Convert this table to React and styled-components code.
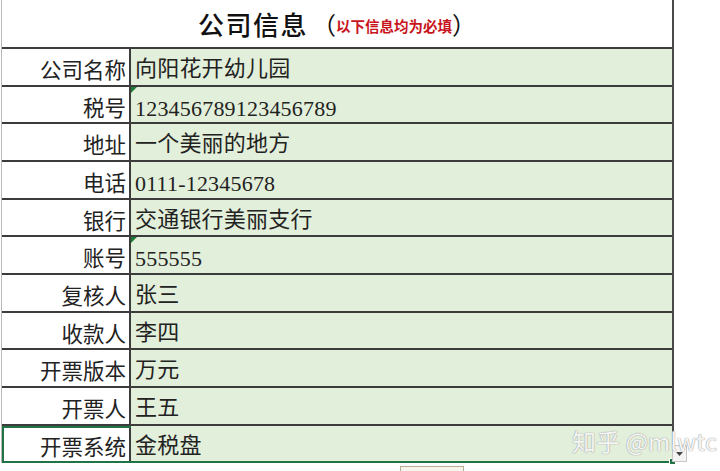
import React from 'react';
import styled, { createGlobalStyle } from 'styled-components';

const GlobalStyle = createGlobalStyle`
  html, body {
    margin: 0;
    padding: 0;
    background: #fff;
  }
  body {
    font-family: "Liberation Serif", "Noto Sans CJK SC", serif;
  }
`;

const Page = styled.div`
  position: relative;
  width: 720px;
  height: 471px;
  overflow: hidden;
`;

const Sheet = styled.div`
  width: 670px;
  margin-left: 1px;
  border-left: 1px solid #b9b9b9;
  border-right: 2px solid #4a4a4a;
`;

const TitleRow = styled.div`
  height: 47px;
  display: flex;
  align-items: center;
  justify-content: center;
  border-bottom: 2px solid #3c3c3c;
  color: #111;
`;

const Title = styled.span`
  font-family: "Noto Sans CJK SC", sans-serif;
  font-size: 26px;
  font-weight: 500;
  letter-spacing: 1.5px;
`;

const Paren = styled.span`
  font-family: "Noto Sans CJK SC", sans-serif;
  font-size: 24px;
  margin: 0 0 0 4px;
  &:last-child {
    margin: 0;
  }
`;

const Note = styled.span`
  font-family: "Noto Sans CJK SC", sans-serif;
  font-size: 14.5px;
  font-weight: 700;
  color: #c8141c;
  padding-top: 4px;
`;

const Row = styled.div`
  display: grid;
  grid-template-columns: 129px 1fr;
  height: ${(p) => p.$h}px;
  box-sizing: border-box;
  border-bottom: 2px solid ${(p) => (p.$active ? '#217346' : '#3c3c3c')};
  ${(p) => p.$active && 'outline: 2px solid #217346; outline-offset: -2px; position: relative;'}
`;

const Label = styled.div`
  display: flex;
  align-items: center;
  justify-content: flex-end;
  padding: 4px 3px 0 0;
  border-right: 2px solid #3c3c3c;
  font-family: "Noto Sans CJK SC", sans-serif;
  font-size: 21.5px;
  line-height: 1;
  color: #222;
  background: #fff;
`;

const Value = styled.div`
  position: relative;
  display: flex;
  align-items: center;
  padding: ${(p) => (p.$num ? '8px' : '4px')} 0 0 4px;
  background: #e2efda;
  font-family: "Liberation Serif", "Noto Sans CJK SC", serif;
  font-size: 22px;
  line-height: 1;
  color: #222;
  letter-spacing: 0.2px;
`;

const Marker = styled.span`
  position: absolute;
  left: 0;
  top: 0;
  width: 0;
  height: 0;
  border-top: 6px solid #1f7a3a;
  border-right: 6px solid transparent;
`;

const Handle = styled.span`
  position: absolute;
  right: -4px;
  bottom: -4px;
  width: 5px;
  height: 5px;
  background: #217346;
  border: 1px solid #fff;
`;

const DropButton = styled.div`
  position: absolute;
  left: 672px;
  top: 445px;
  width: 15px;
  height: 17px;
  box-sizing: border-box;
  border: 1px solid #c6c6c6;
  background: #f4f4f4;
  display: flex;
  align-items: center;
  justify-content: center;
`;

const Tab = styled.div`
  width: 62px;
  height: 6px;
  margin: 3px 0 0 400px;
  border: 1px solid #b7ad95;
  border-bottom: none;
  background: #f7f4ec;
`;

const Watermark = styled.div`
  position: absolute;
  left: 572px;
  top: 423px;
  font-family: "Noto Sans CJK SC", sans-serif;
  font-size: 24px;
  color: rgba(255, 255, 255, 0.92);
  text-shadow: 0 0 1px #9a9a9a, 0 0 1px #9a9a9a;
  white-space: nowrap;
`;

const rows = [
  { label: '公司名称', value: '向阳花开幼儿园', h: 38 },
  { label: '税号', value: '123456789123456789', h: 37, mark: true, num: true },
  { label: '地址', value: '一个美丽的地方', h: 38 },
  { label: '电话', value: '0111-12345678', h: 38, num: true },
  { label: '银行', value: '交通银行美丽支行', h: 37 },
  { label: '账号', value: '555555', h: 38, mark: true, num: true },
  { label: '复核人', value: '张三', h: 38 },
  { label: '收款人', value: '李四', h: 37 },
  { label: '开票版本', value: '万元', h: 38 },
  { label: '开票人', value: '王五', h: 38 },
  { label: '开票系统', value: '金税盘', h: 37, active: true },
];

const App = () => {
  return (
    <Page>
      <GlobalStyle />
      <Sheet>
        <TitleRow>
          <Title>公司信息</Title>
          <Paren>（</Paren>
          <Note>以下信息均为必填</Note>
          <Paren>）</Paren>
        </TitleRow>
        {rows.map((r) => (
          <Row key={r.label} $h={r.h} $active={r.active}>
            <Label>{r.label}</Label>
            <Value $num={r.num}>
              {r.mark && <Marker />}
              {r.value}
              {r.active && <Handle />}
            </Value>
          </Row>
        ))}
      </Sheet>
      <Tab />
      <DropButton>
        <svg width="7" height="4" viewBox="0 0 7 4">
          <path d="M0 0 L7 0 L3.5 4 Z" fill="#444" />
        </svg>
      </DropButton>
      <Watermark>知乎 @mlwtc</Watermark>
    </Page>
  );
};

export default App;
